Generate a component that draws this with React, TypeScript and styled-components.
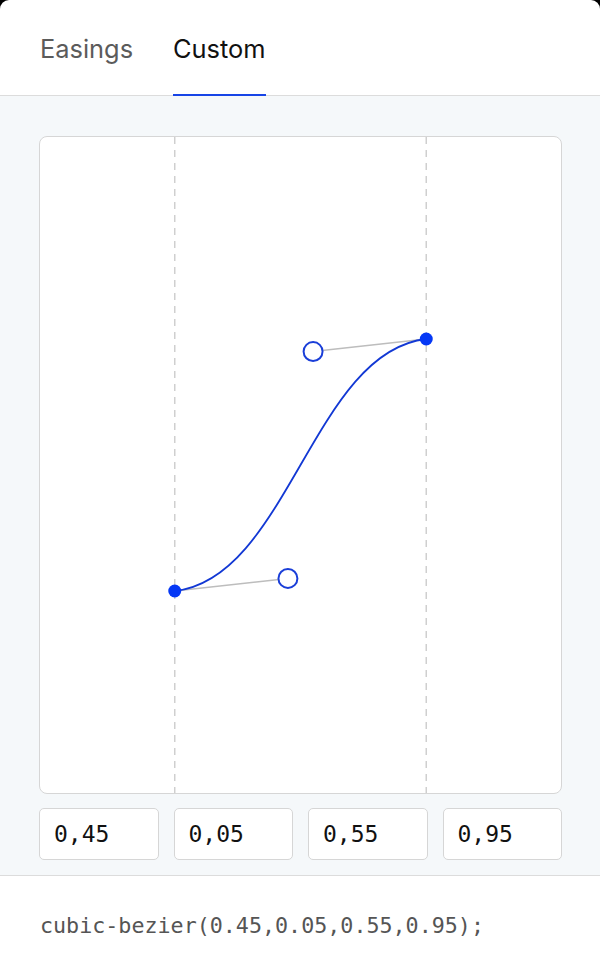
import styled, { createGlobalStyle } from 'styled-components';

const GlobalStyle = createGlobalStyle`
  html, body {
    margin: 0;
    padding: 0;
    background: #000;
  }
  * {
    box-sizing: border-box;
  }
`;

const bezier = [0.45, 0.05, 0.55, 0.95];
const tabs = ['Easings', 'Custom'];

// curve box in card coordinates
const X0 = 136;
const Y0 = 455;
const SIZE = 252;

function BezierGraph() {
  const [x1, y1, x2, y2] = bezier;
  const p1 = { x: X0 + x1 * SIZE, y: Y0 - y1 * SIZE };
  const p2 = { x: X0 + x2 * SIZE, y: Y0 - y2 * SIZE };
  const end = { x: X0 + SIZE, y: Y0 - SIZE };

  return (
    <svg width="100%" height="100%" viewBox="0 0 522 656" preserveAspectRatio="none">
      <line x1={X0 - 1} y1={0} x2={X0 - 1} y2={656} stroke="#cfcfcf" strokeWidth={1.5} strokeDasharray="7 6" />
      <line x1={end.x - 1} y1={0} x2={end.x - 1} y2={656} stroke="#cfcfcf" strokeWidth={1.5} strokeDasharray="7 6" />
      <line x1={X0 - 1} y1={Y0 - 1} x2={p1.x - 1} y2={p1.y - 1} stroke="#bdbdbd" strokeWidth={1.5} />
      <line x1={end.x - 1} y1={end.y - 1} x2={p2.x - 1} y2={p2.y - 1} stroke="#bdbdbd" strokeWidth={1.5} />
      <path
        d={`M${X0 - 1} ${Y0 - 1} C ${p1.x - 1} ${p1.y - 1}, ${p2.x - 1} ${p2.y - 1}, ${end.x - 1} ${end.y - 1}`}
        fill="none"
        stroke="#1238d4"
        strokeWidth={1.8}
      />
      <circle cx={X0 - 1} cy={Y0 - 1} r={6.5} fill="#0538f5" />
      <circle cx={end.x - 1} cy={end.y - 1} r={6.5} fill="#0538f5" />
      <circle cx={p1.x - 1} cy={p1.y - 1} r={9.5} fill="#fff" stroke="#1a3ed8" strokeWidth={2} />
      <circle cx={p2.x - 1} cy={p2.y - 1} r={9.5} fill="#fff" stroke="#1a3ed8" strokeWidth={2} />
    </svg>
  );
}

export default function App() {
  return (
    <>
      <GlobalStyle />
      <Page>
        <Header>
          {tabs.map((t) => (
            <Tab key={t} $active={t === 'Custom'}>
              {t}
            </Tab>
          ))}
        </Header>
        <Editor>
          <Card>
            <BezierGraph />
          </Card>
          <Inputs>
            {bezier.map((v, i) => (
              <ValueInput key={i} readOnly value={v.toFixed(2).replace('.', ',')} />
            ))}
          </Inputs>
        </Editor>
        <Footer>
          <Code>cubic-bezier({bezier.join(',')});</Code>
        </Footer>
      </Page>
    </>
  );
}

const Page = styled.div`
  width: 600px;
  height: 966px;
  display: flex;
  flex-direction: column;
  background: #fff;
  border-radius: 9px 9px 0 0;
  overflow: hidden;
  font-family: Inter, 'Noto Sans', sans-serif;
`;

const Header = styled.div`
  height: 96px;
  display: flex;
  align-items: flex-start;
  gap: 40px;
  padding: 0 40px;
  border-bottom: 1px solid #dcdcdc;
`;

const Tab = styled.div<{ $active?: boolean }>`
  display: flex;
  align-items: center;
  height: 96px;
  padding-top: 2px;
  font-size: 25.4px;
  color: ${(p) => (p.$active ? '#111' : '#5b5b5b')};
  border-bottom: 2px solid ${(p) => (p.$active ? '#1744e6' : 'transparent')};
`;

const Editor = styled.div`
  display: flex;
  flex-direction: column;
  gap: 14px;
  padding: 40px 38px 15px 39px;
  background: #f5f8fa;
  border-bottom: 1px solid #dcdcdc;
`;

const Card = styled.div`
  height: 658px;
  background: #fff;
  border: 1px solid #d6d6d6;
  border-radius: 8px;
  overflow: hidden;

  svg {
    display: block;
  }
`;

const Inputs = styled.div`
  display: grid;
  grid-template-columns: repeat(4, 1fr);
  gap: 15px;
`;

const ValueInput = styled.input`
  width: 100%;
  height: 52px;
  padding: 0 14px;
  background: #fff;
  border: 1px solid #d6d6d6;
  border-radius: 5px;
  font-family: 'DejaVu Sans Mono', monospace;
  font-size: 23px;
  color: #111;
  outline: none;
`;

const Footer = styled.div`
  flex: 1;
  padding: 37px 40px;
  background: #fff;
`;

const Code = styled.div`
  font-family: 'DejaVu Sans Mono', monospace;
  font-size: 21.7px;
  line-height: 26px;
  color: #555;
`;
